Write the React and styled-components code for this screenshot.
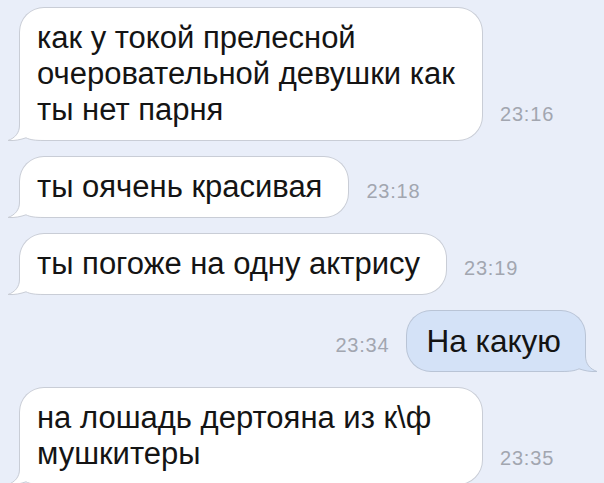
import React from 'react'
import styled, { createGlobalStyle } from 'styled-components'

const GlobalStyle = createGlobalStyle`
    html, body {
        margin: 0;
        padding: 0;
        background: #e9eef9;
    }
    body {
        font-family: 'Liberation Sans', Arial, sans-serif;
    }
`

const Chat = styled.div`
    width: 604px;
    height: 483px;
    box-sizing: border-box;
    padding: 8px 19px 0 20px;
    display: flex;
    flex-direction: column;
    gap: 17px;
    overflow: hidden;
    background: #e9eef9;
`

const Row = styled.div`
    display: flex;
    align-items: flex-end;
    justify-content: ${props => (props.$out ? 'flex-end' : 'flex-start')};
    gap: 18px;
`

const Bubble = styled.div`
    position: relative;
    box-sizing: border-box;
    width: ${props => (props.$wide ? '462px' : 'auto')};
    padding: 12px ${props => (props.$out ? '24px' : '26px')} 12px
        ${props => (props.$out ? '19px' : '17px')};
    border-radius: 24px;
    background: ${props => (props.$out ? '#d4e2f7' : '#ffffff')};
    box-shadow: 0 0 0 1px ${props => (props.$out ? '#b9c4d6' : '#c9cdd6')};
    color: #141414;
    font-size: ${props => (props.$out ? '31.5px' : '31px')};
    line-height: 36px;
    white-space: nowrap;
`

const Text = styled.div`
    position: relative;
    z-index: 1;
`

const Tail = styled.svg`
    position: absolute;
    z-index: 0;
    bottom: -1px;
    width: 37px;
    height: 30px;
    overflow: visible;
    ${props =>
        props.$out
            ? 'right: -13px; transform: scaleX(-1);'
            : 'left: -13px;'}
`

const Time = styled.span`
    flex: none;
    padding-bottom: 14px;
    font-size: 20px;
    line-height: 24px;
    letter-spacing: 0.8px;
    color: #a2a6b0;
`

function BubbleTail({ out }) {
    const fill = out ? '#d4e2f7' : '#ffffff'
    const stroke = out ? '#b9c4d6' : '#c9cdd6'
    return (
        <Tail $out={out} viewBox="0 0 37 30">
            <path
                d="M13 0 L13 14 C13 22 8 27 1 29.5 C8 30 14 28.5 19 26.8 C23 28.8 28 29.5 37 29.5 L37 0 Z"
                fill={fill}
            />
            <path
                d="M12.5 0 L12.5 14 C12.5 22 8 27 1 29.5 C8 30 14 28.5 19 26.8 C23 28.8 28 29.5 37 29.5"
                fill="none"
                stroke={stroke}
                strokeWidth="1"
            />
        </Tail>
    )
}

const messages = [
    {
        lines: ['как у токой прелесной', 'очеровательной девушки как', 'ты нет парня'],
        time: '23:16',
        wide: true,
    },
    { lines: ['ты оячень красивая'], time: '23:18' },
    { lines: ['ты погоже на одну актрису'], time: '23:19' },
    { lines: ['На какую'], time: '23:34', out: true },
    {
        lines: ['на лошадь дертояна из к\\ф', 'мушкитеры'],
        time: '23:35',
        wide: true,
    },
]

export default function App() {
    return (
        <>
            <GlobalStyle />
            <Chat>
                {messages.map((msg, i) => (
                    <Row key={i} $out={msg.out}>
                        {msg.out && <Time>{msg.time}</Time>}
                        <Bubble $out={msg.out} $wide={msg.wide}>
                            {msg.lines.map((line, j) => (
                                <Text key={j}>{line}</Text>
                            ))}
                            <BubbleTail out={msg.out} />
                        </Bubble>
                        {!msg.out && <Time>{msg.time}</Time>}
                    </Row>
                ))}
            </Chat>
        </>
    )
}
